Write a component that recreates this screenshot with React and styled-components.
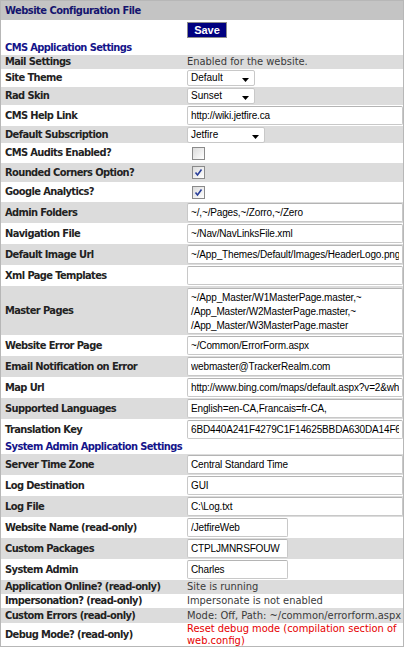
import * as React from 'react';
import styled, { createGlobalStyle } from 'styled-components';

const GlobalStyle = createGlobalStyle`
  body {
    margin: 0;
    background: #fff;
  }
`

const LABEL_FONT = `"DejaVu Sans Condensed", "DejaVu Sans", Tahoma, sans-serif`;
const INPUT_FONT = `"Liberation Sans", Arial, sans-serif`;

const Page = styled.div`
  width: 404px;
  box-sizing: border-box;
  border: 1px solid #b7b7b7;
  font-family: ${LABEL_FONT};
  font-size: 11px;
  color: #222;
`

const TitleBar = styled.div`
  height: 19px;
  line-height: 19px;
  padding-left: 4px;
  background: #c4c4c4;
  color: #14146e;
  font-weight: bold;
  letter-spacing: -0.5px;
`

const Row = styled.div`
  display: grid;
  grid-template-columns: 185px 1fr;
  align-items: center;
  height: ${(props) => props.$h || 15}px;
  background: ${(props) => (props.$alt ? '#dcdcdc' : '#fff')};
`

const Label = styled.div`
  padding-left: 4px;
  font-weight: bold;
  letter-spacing: -0.6px;
  line-height: 14px;
  white-space: nowrap;
`

const Section = styled.div`
  grid-column: 1 / span 2;
  padding-left: 4px;
  color: #14148a;
  font-weight: bold;
  letter-spacing: -0.6px;
  line-height: 14px;
`

const Value = styled.div`
  display: flex;
  align-items: center;
  color: ${(props) => (props.$red ? '#e60000' : '#3a3a3a')};
  padding-left: 1px;
  line-height: 12px;
  white-space: ${(props) => (props.$wrap ? 'normal' : 'nowrap')};
`

const SaveButton = styled.button`
  width: 40px;
  height: 16px;
  padding: 0;
  margin: 0;
  border: 1px solid #8c8c8c;
  background: #000080;
  color: #fff;
  font-family: ${INPUT_FONT};
  font-weight: bold;
  font-size: 11px;
  line-height: 14px;
  cursor: pointer;
`

const TextInput = styled.input`
  box-sizing: border-box;
  width: ${(props) => props.$w || 216}px;
  height: 19px;
  margin: 0;
  padding: 0 3px;
  border: 1px solid #c8c8c8;
  border-top-color: #b4b4b4;
  border-radius: 2px;
  background: #fff;
  font-family: ${INPUT_FONT};
  font-size: 10px;
  letter-spacing: -0.15px;
  color: #000;
  outline: none;
`

const TextArea = styled.textarea`
  box-sizing: border-box;
  width: 216px;
  height: 46px;
  margin: 0;
  padding: 2px 3px;
  border: 1px solid #c8c8c8;
  border-top-color: #b4b4b4;
  border-radius: 2px;
  font-family: ${INPUT_FONT};
  font-size: 10px;
  letter-spacing: -0.15px;
  line-height: 14px;
  color: #000;
  resize: none;
  overflow: hidden;
  outline: none;
`

const Dropdown = styled.div`
  box-sizing: border-box;
  display: flex;
  align-items: center;
  justify-content: space-between;
  width: ${(props) => props.$w || 68}px;
  height: 16px;
  padding: 0 5px 0 3px;
  border: 1px solid #c8c8c8;
  border-radius: 2px;
  background: #fff;
  font-family: ${INPUT_FONT};
  font-size: 10px;
  color: #000;

  & svg {
    margin-top: 4px;
  }
`

const CheckBox = styled.span`
  box-sizing: border-box;
  display: inline-flex;
  align-items: center;
  justify-content: center;
  width: 13px;
  height: 13px;
  margin-left: 5px;
  border: 1px solid #8a8a8a;
  background: linear-gradient(135deg, #dcdcdc 0%, #f4f4f4 70%, #fff 100%);
`

const Arrow = () => (
  <svg width="7" height="4" viewBox="0 0 7 4">
    <polygon points="0,0 7,0 3.5,4" fill="#000" />
  </svg>
)

const Check = ({ checked }) => (
  <CheckBox>
    {checked && (
      <svg width="9" height="9" viewBox="0 0 9 9">
        <path d="M1.5 4.5 L3.5 7 L7.5 1.5" stroke="#2a3f9a" strokeWidth="1.6" fill="none" />
      </svg>
    )}
  </CheckBox>
)

const InputRow = ({ label, value, alt, w }) => (
  <Row $alt={alt} $h={21}>
    <Label>{label}</Label>
    <Value><TextInput $w={w} defaultValue={value} readOnly /></Value>
  </Row>
)

const SelectRow = ({ label, value, alt, w, h }) => (
  <Row $alt={alt} $h={h || 18}>
    <Label>{label}</Label>
    <Value><Dropdown $w={w}><span>{value}</span><Arrow /></Dropdown></Value>
  </Row>
)

const CheckRow = ({ label, checked, alt, h }) => (
  <Row $alt={alt} $h={h || 20}>
    <Label>{label}</Label>
    <Value><Check checked={checked} /></Value>
  </Row>
)

const TextRow = ({ label, value, alt, red, h }) => (
  <Row $alt={alt} $h={h || 14}>
    <Label>{label}</Label>
    <Value $red={red} $wrap={red}>{value}</Value>
  </Row>
)

const cmsInputs = [
  { label: 'Admin Folders', value: '~/,~/Pages,~/Zorro,~/Zero', alt: true },
  { label: 'Navigation File', value: '~/Nav/NavLinksFile.xml' },
  { label: 'Default Image Url', value: '~/App_Themes/Default/Images/HeaderLogo.png', alt: true },
  { label: 'Xml Page Templates', value: '' },
]

const cmsInputsAfter = [
  { label: 'Website Error Page', value: '~/Common/ErrorForm.aspx' },
  { label: 'Email Notification on Error', value: 'webmaster@TrackerRealm.com', alt: true },
  { label: 'Map Url', value: 'http://www.bing.com/maps/default.aspx?v=2&where1=Winnipeg' },
  { label: 'Supported Languages', value: 'English=en-CA,Francais=fr-CA,', alt: true },
  { label: 'Translation Key', value: '6BD440A241F4279C1F14625BBDA630DA14F644' },
]

const adminInputs = [
  { label: 'Server Time Zone', value: 'Central Standard Time', alt: true },
  { label: 'Log Destination', value: 'GUI' },
  { label: 'Log File', value: 'C:\\Log.txt', alt: true },
  { label: 'Website Name (read-only)', value: '/JetfireWeb', w: 101 },
  { label: 'Custom Packages', value: 'CTPLJMNRSFOUW', alt: true, w: 101 },
  { label: 'System Admin', value: 'Charles', w: 101 },
]

export default function App() {
  return (
    <>
      <GlobalStyle />
      <Page>
        <TitleBar>Website Configuration File</TitleBar>
        <Row $h={20}>
          <div />
          <Value><SaveButton>Save</SaveButton></Value>
        </Row>
        <Row $h={15}>
          <Section>CMS Application Settings</Section>
        </Row>
        <TextRow label="Mail Settings" value="Enabled for the website." alt />
        <SelectRow label="Site Theme" value="Default" />
        <SelectRow label="Rad Skin" value="Sunset" alt />
        <InputRow label="CMS Help Link" value="http://wiki.jetfire.ca" />
        <SelectRow label="Default Subscription" value="Jetfire" alt w={78} h={17} />
        <CheckRow label="CMS Audits Enabled?" />
        <CheckRow label="Rounded Corners Option?" checked alt h={19} />
        <CheckRow label="Google Analytics?" checked />
        {cmsInputs.map((item) => (
          <InputRow key={`cms_${item.label}`} {...item} />
        ))}
        <Row $alt $h={49}>
          <Label>Master Pages</Label>
          <Value>
            <TextArea
              readOnly
              defaultValue={'~/App_Master/W1MasterPage.master,~\n/App_Master/W2MasterPage.master,~\n/App_Master/W3MasterPage.master'}
            />
          </Value>
        </Row>
        {cmsInputsAfter.map((item) => (
          <InputRow key={`cms2_${item.label}`} {...item} />
        ))}
        <Row $h={14}>
          <Section>System Admin Application Settings</Section>
        </Row>
        {adminInputs.map((item) => (
          <InputRow key={`admin_${item.label}`} {...item} />
        ))}
        <TextRow label="Application Online? (read-only)" value="Site is running" alt />
        <TextRow label="Impersonation? (read-only)" value="Impersonate is not enabled" />
        <TextRow label="Custom Errors (read-only)" value="Mode: Off, Path: ~/common/errorform.aspx" alt h={15} />
        <TextRow
          label="Debug Mode? (read-only)"
          value="Reset debug mode (compilation section of web.config)"
          red
          h={23}
        />
      </Page>
    </>
  )
}
